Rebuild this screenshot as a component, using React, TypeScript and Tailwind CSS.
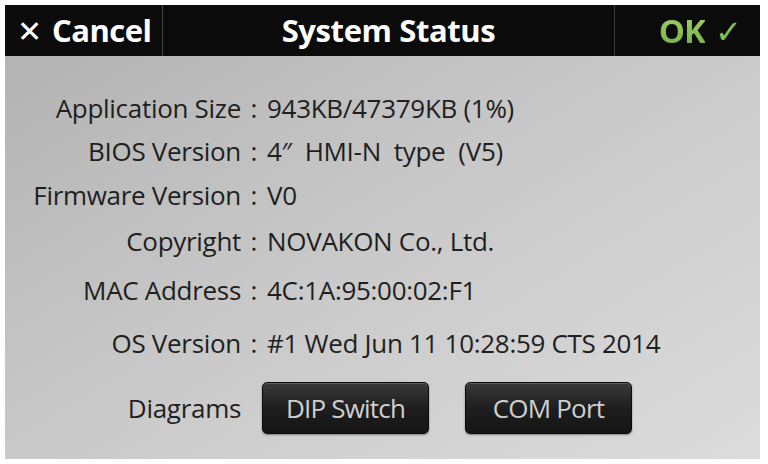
import React from "react";

const rows = [
  { label: "Application Size", value: "943KB/47379KB (1%)", gap: "mt-0" },
  { label: "BIOS Version", value: "4\u2033  HMI-N  type  (V5)", gap: "mt-[13px]" },
  { label: "Firmware Version", value: "V0", gap: "mt-[14px]" },
  { label: "Copyright", value: "NOVAKON Co., Ltd.", gap: "mt-[16px]" },
  { label: "MAC Address", value: "4C:1A:95:00:02:F1", gap: "mt-[19px]" },
  { label: "OS Version", value: "#1 Wed Jun 11 10:28:59 CTS 2014", gap: "mt-[23px]" },
];

const font = { fontFamily: '"Open Sans", "Noto Sans", sans-serif' };

function DarkButton({ children }: { children: React.ReactNode }) {
  return (
    <button className="flex h-[52px] w-[167px] items-center justify-center rounded-[5px] border border-[#0c0c0c] bg-gradient-to-b from-[#3a3a3a] via-[#1e1e1e] to-[#151515] text-[26px] tracking-[-0.8px] text-[#cfcfcf] shadow-[inset_0_1px_0_rgba(255,255,255,0.18),0_1px_2px_rgba(0,0,0,0.4)]">
      {children}
    </button>
  );
}

export default function App() {
  return (
    <div className="h-[464px] w-[768px] bg-white pl-[5px] pt-[5px]" style={font}>
      <div className="flex h-[454px] w-[755px] flex-col bg-gradient-to-br from-[#b0b0b0] via-[#c9c9c9] to-[#dcdcdc]">
        {/* Header */}
        <div className="flex h-[51px] shrink-0 items-center bg-[#0b0b0b] text-white">
          <div className="flex h-full w-[158px] items-center border-r border-[#444] pl-[12px] font-bold">
            <span className="mr-[10px] text-[30px] font-normal">✕</span>
            <span className="text-[31px] tracking-[-0.5px]">Cancel</span>
          </div>
          <div className="flex flex-1 items-center justify-center text-[31px] font-bold tracking-[-0.4px]">
            System Status
          </div>
          <div className="flex h-full w-[146px] items-center justify-end border-l border-[#3a3a3a] pr-[18px] font-bold">
            <span className="bg-gradient-to-b from-[#a8d870] to-[#6ea83e] bg-clip-text text-[33px] tracking-[-1px] text-transparent">OK</span>
            <span className="ml-[10px] text-[32px] font-normal text-[#86c04e]">✓</span>
          </div>
        </div>

        {/* Info rows */}
        <div className="flex flex-col pt-[37px] text-[26px] text-[#1f1f1f]">
          {rows.map((r) => (
            <div key={r.label} className={`flex h-[30px] items-center leading-[30px] ${r.gap}`}>
              <span className="w-[236px] whitespace-nowrap text-right tracking-[-0.3px]">{r.label}</span>
              <span className="w-[26px] text-center">:</span>
              <span className="whitespace-pre tracking-[-0.3px]">{r.value}</span>
            </div>
          ))}
          <div className="mt-[24px] flex items-center">
            <span className="w-[236px] text-right tracking-[-0.3px]">Diagrams</span>
            <div className="ml-[21px] flex gap-[36px]">
              <DarkButton>DIP Switch</DarkButton>
              <DarkButton>COM Port</DarkButton>
            </div>
          </div>
        </div>
      </div>
    </div>
  );
}
